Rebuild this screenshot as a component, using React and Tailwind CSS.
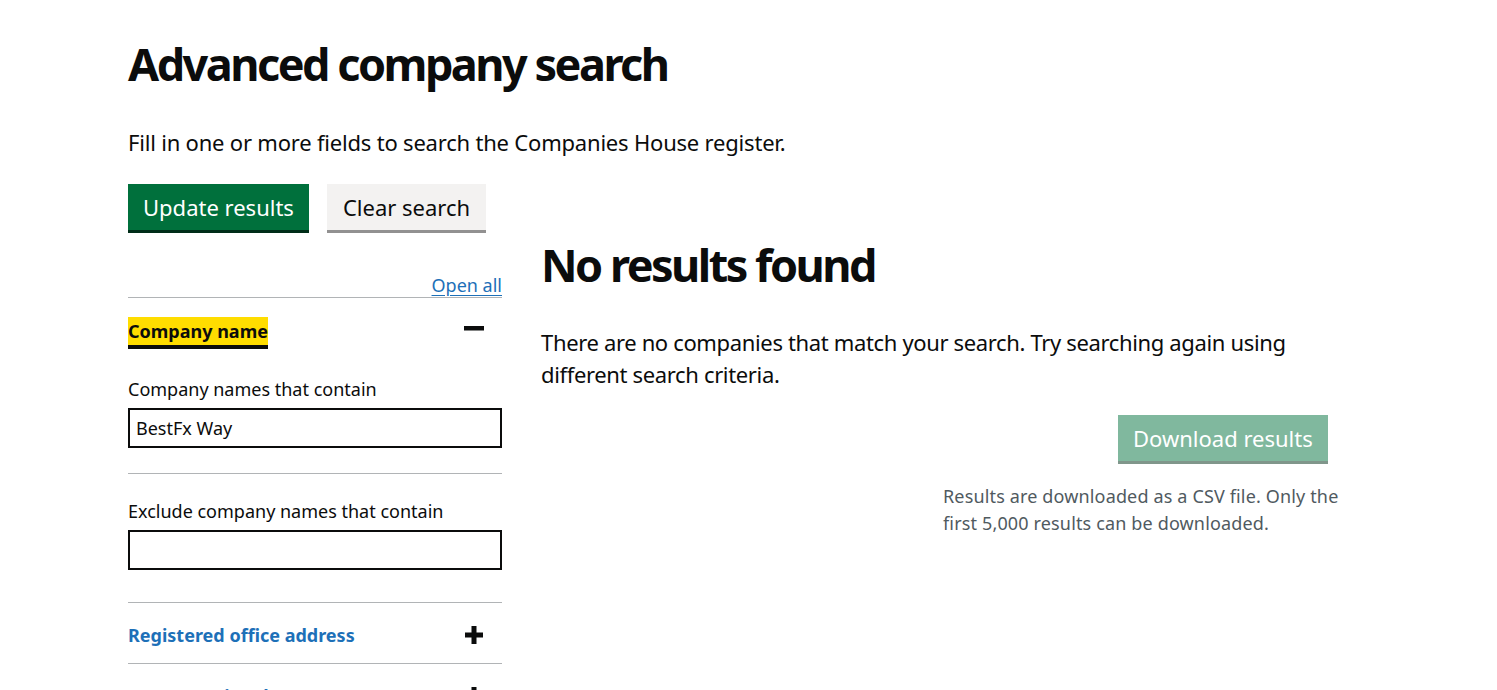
import React from 'react';

const font = { fontFamily: '"Noto Sans", Arial, sans-serif' };

function Plus() {
  return (
    <svg width="20" height="20" viewBox="0 0 20 20" className="shrink-0">
      <rect x="7.5" y="1" width="5" height="18" fill="#0b0c0c" />
      <rect x="1" y="7.5" width="18" height="5" fill="#0b0c0c" />
    </svg>
  );
}

function Minus() {
  return (
    <svg width="20" height="20" viewBox="0 0 20 20" className="shrink-0">
      <rect x="0" y="5" width="20" height="4.5" fill="#0b0c0c" />
    </svg>
  );
}

function Section({ title }) {
  return (
    <div className="border-t border-[#b1b4b6] flex items-center justify-between h-[61px] pt-[4px]">
      <span className="text-[18px] font-bold text-[#1d70b8]">{title}</span>
      <span className="mr-[18px]"><Plus /></span>
    </div>
  );
}

export default function App() {
  return (
    <div className="min-h-screen bg-white text-[#0b0c0c]" style={font}>
      <div className="px-[128px] pt-[38px]">
        <h1 className="text-[45px] leading-[52px] font-bold tracking-[-2.5px] mb-[37px]">Advanced company search</h1>
        <p className="text-[22px] leading-[30px] tracking-[-0.2px] mb-[27px]">Fill in one or more fields to search the Companies House register.</p>

        <div className="flex gap-[18px] mb-[3px]">
          <button className="h-[46px] px-[15px] bg-[#00703c] text-white text-[22px] shadow-[0_3px_0_#002d18] leading-none">
            Update results
          </button>
          <button className="h-[46px] px-[16px] bg-[#f3f2f1] text-[#0b0c0c] text-[22px] shadow-[0_3px_0_#929191] leading-none">
            Clear search
          </button>
        </div>

        <div className="flex gap-[39px]">
          {/* Filters */}
          <div className="w-[374px] shrink-0 pt-[40px]">
            <div className="flex justify-end h-[24px]">
              <a href="#" className="text-[18px] leading-[24px] text-[#1d70b8] underline underline-offset-[3px]">Open all</a>
            </div>

            <div className="border-t border-[#b1b4b6]">
              <div className="flex items-center justify-between mt-[19px] h-[28px]">
                <span className="inline-block text-[18px] font-bold leading-[28px] h-[28px] bg-[#ffdd00] shadow-[0_4px_0_#0b0c0c]">Company name</span>
                <span className="mr-[18px]"><Minus /></span>
              </div>
              <div className="pt-[32px] pb-[25px]">
                <label className="block text-[18px] leading-[24px] mb-[7px]">Company names that contain</label>
                <input
                  type="text"
                  defaultValue="BestFx Way"
                  className="block w-full h-[40px] border-2 border-[#0b0c0c] px-[6px] text-[18px] outline-none"
                  style={font}
                />
              </div>
              <div className="border-t border-[#b1b4b6] pt-[25px] pb-[32px]">
                <label className="block text-[18px] leading-[24px] mb-[7px]">Exclude company names that contain</label>
                <input
                  type="text"
                  className="block w-full h-[40px] border-2 border-[#0b0c0c] px-[6px] text-[18px] outline-none"
                  style={font}
                />
              </div>
            </div>

            <Section title="Registered office address" />
            <Section title="Incorporation date" />
          </div>

          {/* Results */}
          <div className="flex-1 pt-[6px]">
            <h2 className="text-[45px] leading-[52px] font-bold tracking-[-2.5px] mb-[35px]">No results found</h2>
            <p className="text-[22px] leading-[32px] tracking-[-0.35px] max-w-[760px]">
              There are no companies that match your search. Try searching again using different search criteria.
            </p>
            <div className="pl-[402px] pt-[25px]">
              <button className="ml-[175px] h-[46px] px-[15px] bg-[#80b89e] text-white text-[22px] shadow-[0_3px_0_#80968b] leading-none">
                Download results
              </button>
              <p className="mt-[22px] text-[18px] leading-[27px] tracking-[0.15px] text-[#505a5f] w-[410px]">
                Results are downloaded as a CSV file. Only the first 5,000 results can be downloaded.
              </p>
            </div>
          </div>
        </div>
      </div>
    </div>
  );
}
